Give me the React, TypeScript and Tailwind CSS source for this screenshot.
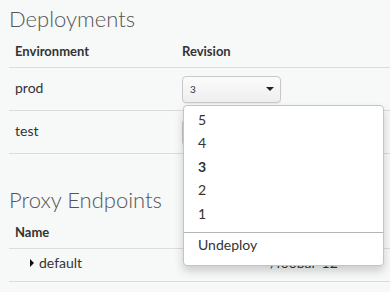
import React from 'react';

const revisions = ['5', '4', '3', '2', '1'];

const Caret = () => (
    <svg width="8" height="4" viewBox="0 0 8 4" className="block">
        <path d="M0 0 L8 0 L4 4 Z" fill="#222" />
    </svg>
);

const RevisionSelect: React.FC<{ value: string; open?: boolean }> = ({ value, open }) => (
    <div className="relative">
        <div className="flex h-[27px] w-[99px] items-center justify-between rounded-[4px] border border-[#c8c8c8] bg-gradient-to-b from-[#fbfbfb] to-[#efefef] pl-[7px] pr-[6px] text-[10px] text-[#333] shadow-[0_1px_1px_rgba(0,0,0,0.06)]">
            <span>{value}</span>
            <Caret />
        </div>
        {open && (
            <div className="absolute left-[1px] top-[29px] z-10 w-[201px] h-[161px] rounded-[4px] border border-[#c4c4c4] bg-white pt-[2px] shadow-[0_5px_10px_rgba(0,0,0,0.18)]">
                {revisions.map(r => (
                    <div
                        key={r}
                        className={`h-[23.5px] pl-[14px] text-[14px] leading-[23.5px] text-[#333] ${r === value ? 'font-bold' : ''}`}
                    >
                        {r}
                    </div>
                ))}
                <div className="mt-[7px] border-t border-[#b4b4b4]" />
                <div className="h-[23.5px] pl-[14px] text-[14px] leading-[23.5px] text-[#333]">Undeploy</div>
            </div>
        )}
    </div>
);

export default function App() {
    return (
        <div className="min-h-[292px] overflow-hidden bg-[#f7f8f8] pl-[9px] font-['Lato','Open_Sans',sans-serif] text-[#333]">
            <h2 className="pt-[6px] text-[22px] font-light leading-[26px] text-[#555]">Deployments</h2>

            {/* deployments table */}
            <div className="flex border-b border-[#dcdcdc] pt-[11px] pb-[8px] text-[13px] font-bold leading-[16px]">
                <div className="w-[167px] pl-[6px]">Environment</div>
                <div className="pl-[6px]">Revision</div>
            </div>
            <div className="relative z-10 flex h-[43px] items-center border-b border-[#dcdcdc] text-[14px] leading-[20px]">
                <div className="w-[167px] pl-[6px] pb-[2px]">prod</div>
                <div className="pl-[6px]">
                    <RevisionSelect value="3" open />
                </div>
            </div>
            <div className="flex h-[43px] items-center border-b border-[#dcdcdc] text-[14px] leading-[20px]">
                <div className="w-[167px] pl-[6px] pb-[3px]">test</div>
                <div className="pl-[6px]">
                    <RevisionSelect value="5" />
                </div>
            </div>

            <h2 className="mt-[33px] text-[22px] font-light leading-[26px] text-[#555]">Proxy Endpoints</h2>

            {/* proxy endpoints table */}
            <div className="flex border-b border-[#dcdcdc] pt-[11px] pb-[8px] text-[13px] font-bold leading-[16px]">
                <div className="w-[255px] pl-[6px]">Name</div>
                <div className="pl-[6px]">Base Path</div>
            </div>
            <div className="flex border-b border-[#dcdcdc] pt-[4px] pb-[8px] text-[14px] leading-[20px]">
                <div className="flex w-[255px] items-center pl-[21px]">
                    <svg width="4" height="8" viewBox="0 0 4 8" className="mr-[5px]">
                        <path d="M0 0 L4 4 L0 8 Z" fill="#111" />
                    </svg>
                    <span>default</span>
                </div>
                <div className="pl-[6px]">/foobar-12</div>
            </div>
        </div>
    );
}
